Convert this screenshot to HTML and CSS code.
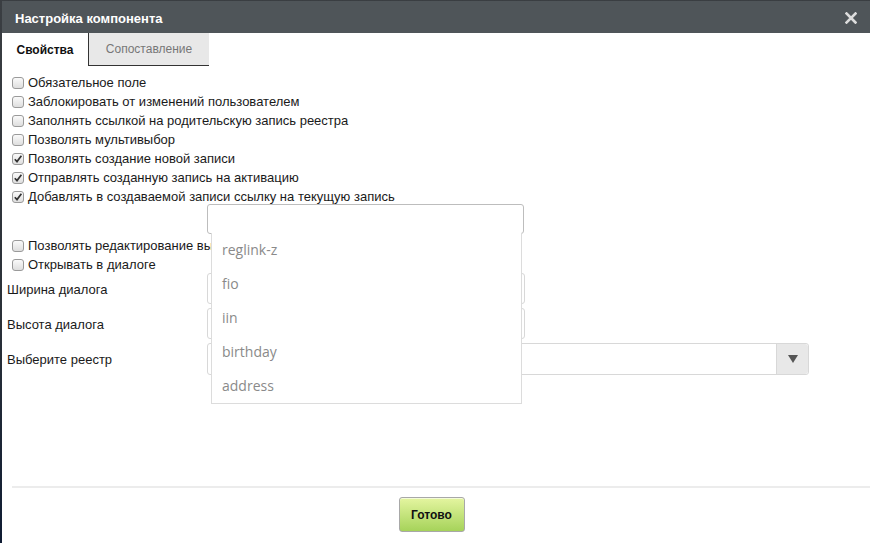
FILE: index.html
```html
<!DOCTYPE html>
<html lang="ru">
<head>
<meta charset="utf-8">
<title>Настройка компонента</title>
<link rel="stylesheet" href="styles.css">
</head>
<body>
<div class="dialog">
  <div class="titlebar">
    <span class="title">Настройка компонента</span>
    <svg class="close" width="12" height="12" viewBox="0 0 12 12"><path d="M1.5 1.5L10.5 10.5M10.5 1.5L1.5 10.5" stroke="#dcdcdc" stroke-width="2.6" stroke-linecap="square"/></svg>
  </div>
  <div class="tabs">
    <div class="tab active">Свойства</div>
    <div class="tab">Сопоставление</div>
    <div class="tab-rest"></div>
  </div>
  <div class="content">
    <div class="checks">
      <div class="row"><span class="cb"></span>Обязательное поле</div>
      <div class="row"><span class="cb"></span>Заблокировать от изменений пользователем</div>
      <div class="row"><span class="cb"></span>Заполнять ссылкой на родительскую запись реестра</div>
      <div class="row"><span class="cb"></span>Позволять мультивыбор</div>
      <div class="row"><span class="cb checked"><svg viewBox="0 0 12 12" width="12" height="12"><path d="M2.8 6.2L5 8.6L9.4 2.8" fill="none" stroke="#333" stroke-width="1.7"/></svg></span>Позволять создание новой записи</div>
      <div class="row"><span class="cb checked"><svg viewBox="0 0 12 12" width="12" height="12"><path d="M2.8 6.2L5 8.6L9.4 2.8" fill="none" stroke="#333" stroke-width="1.7"/></svg></span>Отправлять созданную запись на активацию</div>
      <div class="row"><span class="cb checked"><svg viewBox="0 0 12 12" width="12" height="12"><path d="M2.8 6.2L5 8.6L9.4 2.8" fill="none" stroke="#333" stroke-width="1.7"/></svg></span>Добавлять в создаваемой записи ссылку на текущую запись</div>
      <div class="combo">
        <div class="combo-input"></div>
        <ul class="suggest">
          <li>reglink-z</li>
          <li>fio</li>
          <li>iin</li>
          <li>birthday</li>
          <li>address</li>
        </ul>
      </div>
      <div class="row"><span class="cb"></span><span class="clip">Позволять редактирование выбранной записи</span></div>
      <div class="row"><span class="cb"></span>Открывать в диалоге</div>
    </div>
    <div class="form">
      <div class="frow"><label>Ширина диалога</label><div class="field short"></div></div>
      <div class="frow"><label>Высота диалога</label><div class="field short"></div></div>
      <div class="frow sel"><label>Выберите реестр</label><div class="field long"><span class="arrow"><svg width="10" height="8" viewBox="0 0 10 8"><path d="M0 0H10L5 8Z" fill="#555"/></svg></span></div></div>
    </div>
  </div>
  <div class="footer">
    <button class="done">Готово</button>
  </div>
</div>
</body>
</html>
```
FILE: styles.css
```css
html, body {
  margin: 0;
  padding: 0;
  height: 100%;
}
body {
  background: linear-gradient(#3a3e42, #2a3038 60%, #0f1c33);
  font-family: "Liberation Sans", Arial, sans-serif;
  overflow: hidden;
}
.dialog {
  margin: 1px 0 0 2px;
  height: 542px;
  background: #fff;
  display: flex;
  flex-direction: column;
}
.titlebar {
  height: 32px;
  background: #4f5559;
  display: flex;
  align-items: center;
  justify-content: space-between;
  padding: 0 13px 0 13px;
  box-sizing: border-box;
}
.title {
  color: #fff;
  font-weight: bold;
  font-size: 13px;
  margin-top: 2px;
}
.close {
  display: block;
  margin-top: 1px;
}
.tabs {
  display: flex;
  height: 33px;
}
.tab {
  font-size: 12px;
  display: flex;
  align-items: center;
  justify-content: center;
  box-sizing: border-box;
}
.tab.active {
  width: 87px;
  font-weight: bold;
  color: #111;
  border-right: 1px solid #333;
  padding-top: 1px;
}
.tab:not(.active) {
  width: 120px;
  background: #e8e8e8;
  color: #777;
  border-bottom: 1px solid #333;
  padding-top: 0;
}
.tab-rest {
  flex: 1;
}
.content {
  flex: 1;
  padding-top: 7px;
}
.checks {
  padding-left: 10px;
  position: relative;
}
.row {
  height: 19px;
  display: flex;
  align-items: center;
  font-size: 13px;
  color: #1a1a1a;
  white-space: nowrap;
}
.clip {
  display: block;
  max-width: 184px;
  overflow: hidden;
}
.cb {
  width: 10px;
  height: 10px;
  border: 1px solid #9a9a9a;
  border-radius: 3px;
  background: linear-gradient(#fafafa, #dedede);
  margin-right: 4px;
  position: relative;
  flex: none;
}
.cb svg {
  position: absolute;
  left: -1px;
  top: -1px;
}
.combo {
  position: relative;
  height: 30px;
  margin: -2px 0 2px 195px;
  z-index: 2;
}
.combo-input {
  width: 317px;
  height: 30px;
  box-sizing: border-box;
  border: 1px solid #bdbdbd;
  border-radius: 3px;
  background: #fff;
}
.suggest {
  position: absolute;
  left: 4px;
  top: 29px;
  width: 311px;
  margin: 0;
  padding: 0;
  list-style: none;
  background: #fff;
  border: 1px solid #dcdcdc;
  border-top: none;
  box-sizing: border-box;
}
.suggest li {
  height: 34px;
  line-height: 34px;
  padding-left: 10px;
  font-family: "Open Sans", sans-serif;
  font-size: 14px;
  color: #8a8a8a;
}
.form {
  margin-top: -1px;
  padding: 0 0 0 5px;
  display: flex;
  flex-direction: column;
  gap: 4px;
}
.frow {
  display: flex;
  align-items: center;
  height: 31px;
}
.frow.sel {
  height: 32px;
}
.frow label {
  width: 200px;
  font-size: 13px;
  color: #1a1a1a;
  padding-top: 1px;
}
.field {
  height: 100%;
  box-sizing: border-box;
  border: 1px solid #d8d8d8;
  border-radius: 3px;
  background: #fff;
}
.field.short {
  width: 318px;
}
.field.long {
  width: 602px;
  display: flex;
  justify-content: flex-end;
}
.arrow {
  width: 31px;
  height: 100%;
  background: #e8e8e8;
  border-left: 1px solid #d8d8d8;
  display: flex;
  align-items: center;
  justify-content: center;
  border-radius: 0 3px 3px 0;
}
.footer {
  height: 57px;
  margin-left: 10px;
  border-top: 2px solid #ececec;
  display: flex;
  justify-content: center;
  padding: 9px 19px 0 0;
  box-sizing: border-box;
}
.done {
  width: 66px;
  height: 35px;
  border: 1px solid #a8a8a8;
  border-radius: 3px;
  background: linear-gradient(#e4f5a0, #a6d35a);
  font-family: "Liberation Sans", Arial, sans-serif;
  font-weight: bold;
  font-size: 12px;
  color: #111;
  padding: 0;
  box-shadow: inset 0 1px 0 rgba(255,255,255,0.6);
}
```
